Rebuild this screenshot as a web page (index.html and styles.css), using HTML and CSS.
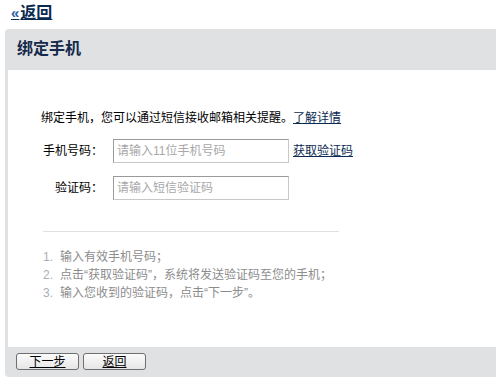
FILE: index.html
```html
<!DOCTYPE html>
<html lang="zh-CN">
<head>
    <meta charset="UTF-8">
    <title>绑定手机</title>
    <link rel="stylesheet" href="styles.css">
</head>
<body>
    <div class="top-nav">
        <a href="#" class="back-link"><span class="arrows">&laquo;</span>返回</a>
    </div>

    <div class="panel">
        <div class="panel-header">
            <h2>绑定手机</h2>
        </div>

        <div class="panel-body">
            <p class="intro">绑定手机，您可以通过短信接收邮箱相关提醒。<a href="#">了解详情</a></p>

            <div class="form-row">
                <label class="field-label">手机号码：</label>
                <input type="text" class="field-input" placeholder="请输入11位手机号码">
                <a href="#" class="get-code">获取验证码</a>
            </div>

            <div class="form-row">
                <label class="field-label">验证码：</label>
                <input type="text" class="field-input" placeholder="请输入短信验证码">
            </div>

            <div class="divider"></div>

            <ol class="steps">
                <li><span class="num">1.</span>输入有效手机号码；</li>
                <li><span class="num">2.</span>点击“获取验证码”，系统将发送验证码至您的手机；</li>
                <li><span class="num">3.</span>输入您收到的验证码，点击“下一步”。</li>
            </ol>
        </div>

        <div class="panel-footer">
            <button class="btn">下一步</button>
            <button class="btn">返回</button>
        </div>
    </div>
</body>
</html>
```

FILE: styles.css
```css
* {
    margin: 0;
    padding: 0;
    box-sizing: border-box;
}

body {
    background: #fff;
    font-family: "Liberation Sans", "Noto Sans CJK SC", sans-serif;
    font-size: 12px;
    color: #000;
}

a {
    color: #0b2a52;
}

.top-nav {
    height: 29px;
    padding: 3px 0 0 11px;
}

.back-link {
    font-size: 16px;
    font-weight: bold;
    line-height: 19px;
    color: #0b2a52;
    text-decoration: underline;
}

.back-link .arrows {
    color: #2c5fa8;
    font-size: 15px;
    margin-right: 1px;
}

.panel {
    margin-left: 5px;
    background: #e0e1e3;
    border-radius: 4px 0 0 4px;
    padding-left: 3px;
}

.panel-header {
    height: 41px;
    padding: 9px 0 0 12px;
    margin-left: -3px;
}

.panel-header h2 {
    font-size: 16px;
    font-weight: bold;
    line-height: 22px;
    color: #15294a;
}

.panel-body {
    background: #fff;
    height: 277px;
    padding: 40px 0 0 33px;
}

.intro {
    line-height: 16px;
    margin-bottom: 13px;
}

.intro a {
    text-decoration: underline;
}

.form-row {
    display: flex;
    align-items: center;
    margin-bottom: 13px;
}

.field-label {
    width: 72px;
    text-align: right;
    padding-right: 10px;
    line-height: 24px;
    white-space: nowrap;
}

.field-input {
    width: 176px;
    height: 24px;
    border: 1px solid #c8c8c8;
    border-top-color: #9a9a9a;
    border-left-color: #9a9a9a;
    padding: 0 3px;
    font-family: "Liberation Sans", "Noto Sans CJK SC", sans-serif;
    font-size: 12px;
    outline: none;
}

.field-input::placeholder {
    color: #a8a8a8;
}

.get-code {
    margin-left: 4px;
    text-decoration: underline;
    line-height: 16px;
}

.divider {
    width: 296px;
    margin: 31px 0 0 2px;
    border-top: 1px solid #e0e0e0;
}

.steps {
    list-style: none;
    margin: 16px 0 0 2px;
    color: #8c8c8c;
}

.steps li {
    line-height: 18px;
}

.steps .num {
    color: #a9aeb8;
    margin-right: 7px;
}

.panel-footer {
    height: 30px;
    padding: 6px 0 0 8px;
    display: flex;
    gap: 4px;
    align-items: flex-start;
}

.btn {
    width: 63px;
    height: 17px;
    border: 1px solid #6f6f6f;
    border-radius: 3px;
    background: linear-gradient(#fbfbfb, #e6e6e6);
    font-family: "Liberation Sans", "Noto Sans CJK SC", sans-serif;
    font-size: 12px;
    line-height: 14px;
    color: #000;
    text-decoration: underline;
}
```
